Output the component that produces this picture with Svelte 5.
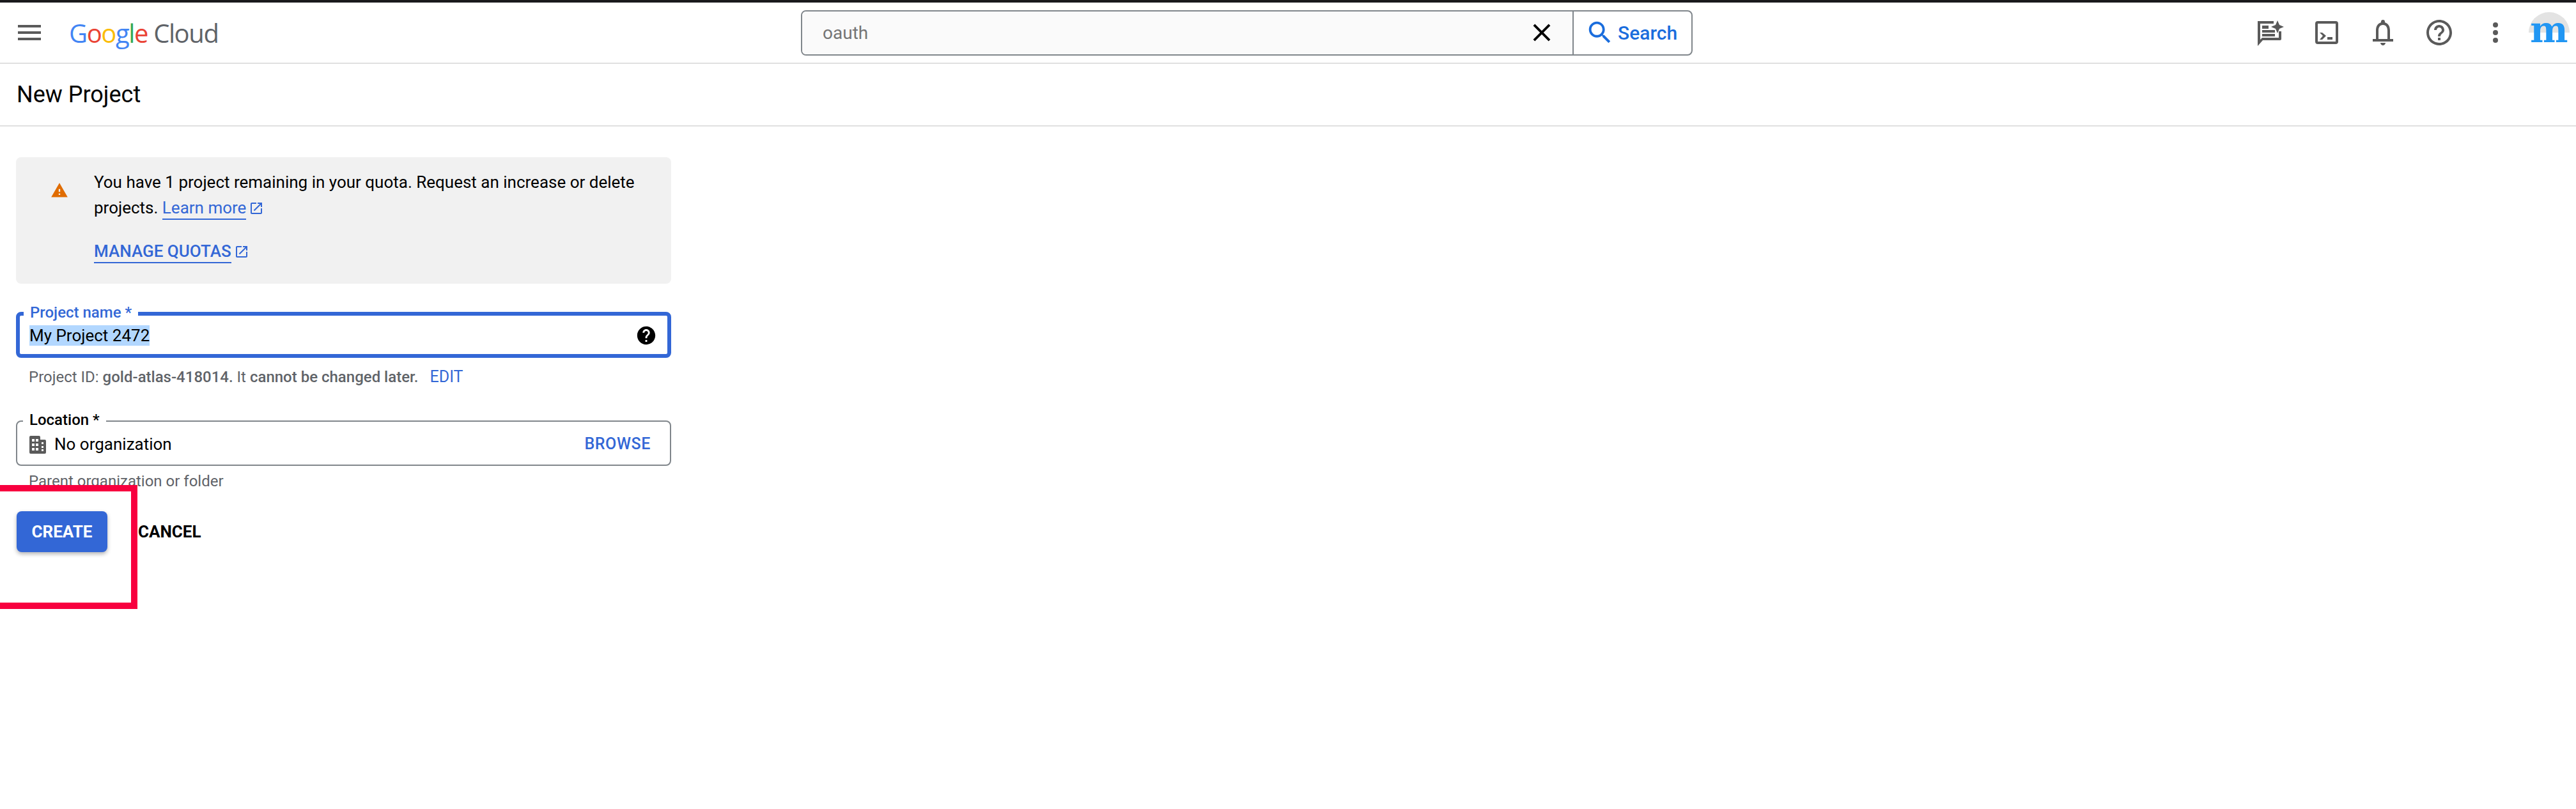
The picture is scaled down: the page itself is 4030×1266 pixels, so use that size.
<script>
  const projectName = 'My Project 2472';
  const helpOutline = 'M11 18h2v-2h-2v2zm1-16C6.48 2 2 6.48 2 12s4.48 10 10 10 10-4.48 10-10S17.52 2 12 2zm0 18c-4.41 0-8-3.59-8-8s3.59-8 8-8 8 3.59 8 8-3.59 8-8 8zm0-14c-2.21 0-4 1.79-4 4h2c0-1.1.9-2 2-2s2 .9 2 2c0 2-3 1.75-3 5h2c0-2.25 3-2.5 3-5 0-2.21-1.79-4-4-4z';
  const openNew = 'M19 19H5V5h7V3H5c-1.11 0-2 .9-2 2v14c0 1.1.89 2 2 2h14c1.1 0 2-.9 2-2v-7h-2v7zM14 3v2h3.59l-9.83 9.83 1.41 1.41L19 6.41V10h2V3h-7z';
</script>

<div class="page">
  <header class="top">
    <div class="brand">
      <svg class="menu" viewBox="0 0 36 24" width="36" height="24"><path d="M0 0h36v4H0zM0 10h36v4H0zM0 20h36v4H0z" /></svg>
      <div class="logo"><span class="b">G</span><span class="r">o</span><span class="y">o</span><span class="b">g</span><span class="g">l</span><span class="r">e</span> <span class="cloud">Cloud</span></div>
    </div>

    <div class="search">
      <div class="query">
        <span>oauth</span>
        <svg viewBox="0 0 24 24" width="46" height="46"><path d="M19 6.41L17.59 5 12 10.59 6.41 5 5 6.41 10.59 12 5 17.59 6.41 19 12 13.41 17.59 19 19 17.59 13.41 12z" /></svg>
      </div>
      <button class="search-btn">
        <svg viewBox="0 0 24 24" width="46" height="46"><path d="M15.5 14h-.79l-.28-.27C15.41 12.59 16 11.11 16 9.5 16 5.91 13.09 3 9.5 3S3 5.91 3 9.5 5.91 16 9.5 16c1.61 0 3.09-.59 4.23-1.57l.27.28v.79l5 4.99L20.49 19l-4.99-5zm-6 0C7.01 14 5 11.99 5 9.5S7.01 5 9.5 5 14 7.01 14 9.5 11.99 14 9.5 14z" /></svg>
        Search
      </button>
    </div>

    <div class="actions">
      <svg viewBox="0 0 48 48" width="48" height="48">
        <path d="M4 6h25v4H8v25l3-3h26V22h4v12a2 2 0 0 1-2 2H12L4 45z" />
        <path d="M11 13h10v5H11zM11 20h20v4H11zM11 26h20v4H11z" />
        <path d="M35 5l3 7 7 3-7 3-3 7-3-7-7-3 7-3z" />
      </svg>
      <svg viewBox="0 0 48 48" width="48" height="48">
        <rect x="8" y="8" width="32" height="32" rx="2" fill="none" stroke="#5a5a5a" stroke-width="4" />
        <path d="M13 24h4l6 5-6 6h-4l5-6zM25 31h8v4h-8z" />
      </svg>
      <svg viewBox="0 0 48 48" width="48" height="48">
        <path d="M24 4a3 3 0 0 1 3 3v1c6 2 8 7 8 13v13h5v4H8v-4h5V21c0-6 2-11 8-13V7a3 3 0 0 1 3-3zm0 8c-5 0-7 4-7 9v13h14V21c0-5-2-9-7-9zM20 40h8c0 2-2 4-4 4s-4-2-4-4z" />
      </svg>
      <svg viewBox="0 0 24 24" width="48" height="48"><path d={helpOutline} /></svg>
      <svg viewBox="0 0 48 48" width="48" height="48"><circle cx="24" cy="12" r="4" /><circle cx="24" cy="24" r="4" /><circle cx="24" cy="36" r="4" /></svg>
      <div class="avatar"><span class="dome"></span><span class="letter">m</span></div>
    </div>
  </header>

  <div class="subhead">New Project</div>

  <main class="form">
    <section class="alert">
      <svg class="warn" viewBox="0 0 24 24" width="28" height="28"><path d="M1 21h22L12 2 1 21zm12-3h-2v-2h2v2zm0-4h-2v-4h2v4z" /></svg>
      <div class="alert-body">
        <p>You have 1 project remaining in your quota. Request an increase or delete projects. <a href="#learn">Learn more</a><svg class="ext" viewBox="0 0 24 24" width="24" height="24"><path d={openNew} /></svg></p>
        <p class="quota"><a href="#quotas">MANAGE QUOTAS</a><svg class="ext" viewBox="0 0 24 24" width="24" height="24"><path d={openNew} /></svg></p>
      </div>
    </section>

    <div class="field focused">
      <label class="legend" for="pname">Project name *</label>
      <span class="selected" id="pname">{projectName}</span>
      <svg viewBox="0 0 24 24" width="34" height="34"><path d="M12 2C6.48 2 2 6.48 2 12s4.48 10 10 10 10-4.48 10-10S17.52 2 12 2zm1 17h-2v-2h2v2zm2.07-7.75l-.9.92C13.45 12.9 13 13.5 13 15h-2v-.5c0-1.1.45-2.1 1.17-2.83l1.24-1.26c.37-.36.59-.86.59-1.41 0-1.1-.9-2-2-2s-2 .9-2 2H8c0-2.21 1.79-4 4-4s4 1.79 4 4c0 .88-.36 1.68-.93 2.25z" /></svg>
    </div>
    <div class="hint">Project ID: <b>gold-atlas-418014.</b> It <b>cannot be changed later.</b><a class="edit" href="#edit">EDIT</a></div>

    <div class="field location">
      <span class="legend">Location *</span>
      <svg class="org" viewBox="0 0 26 28" width="26" height="28"><path d="M2 0h13a2 2 0 0 1 2 2v4h7a2 2 0 0 1 2 2v18a2 2 0 0 1-2 2H2a2 2 0 0 1-2-2V2a2 2 0 0 1 2-2zm2 5v4h4V5zm6 0v4h4V5zM4 12v4h4v-4zm6 0v4h4v-4zM4 19v4h4v-4zm6 0v4h4v-4zm9-9v3h3v-3zm0 6v3h3v-3zm0 5v3h3v-3z" fill-rule="evenodd" /></svg>
      <span class="org-name">No organization</span>
      <a class="browse" href="#browse">BROWSE</a>
    </div>
    <div class="hint parent">Parent organization or folder</div>

    <div class="buttons">
      <button class="create">CREATE</button>
      <button class="cancel">CANCEL</button>
    </div>
  </main>

  <div class="callout"></div>
</div>

<style>
  :global(body) {
    margin: 0;
    background: #fff;
  }

  .page {
    position: relative;
    width: 4030px;
    height: 1266px;
    overflow: hidden;
    font-family: Roboto, "Liberation Sans", sans-serif;
    color: #000;
  }

  svg {
    fill: #5a5a5a;
    display: block;
    flex: none;
  }

  button {
    font-family: inherit;
    background: none;
    border: none;
    padding: 0;
    cursor: pointer;
  }

  a {
    color: #3367d6;
    text-decoration: none;
  }

  .top {
    display: grid;
    grid-template-columns: 1253px 1395px 1fr;
    align-items: center;
    height: 94px;
    border-top: 4px solid #1a1a1c;
    border-bottom: 2px solid #e0e0e0;
  }

  .brand {
    display: flex;
    align-items: center;
    padding-left: 28px;
  }

  .logo {
    margin-left: 44px;
    font-family: "Open Sans", sans-serif;
    font-size: 40px;
    letter-spacing: -1.4px;
    color: #5f6368;
  }

  .b { color: #4285f4; }
  .r { color: #ea4335; }
  .y { color: #fbbc05; }
  .g { color: #34a853; }
  .cloud { color: #5f6368; }

  .search {
    display: flex;
    height: 71px;
    box-sizing: border-box;
    border: 2px solid #80868b;
    border-radius: 8px;
    overflow: hidden;
  }

  .query {
    flex: 1;
    display: flex;
    align-items: center;
    justify-content: space-between;
    padding: 0 25px 0 32px;
    background: #fafafa;
    font-size: 28px;
    color: #757575;
  }

  .query svg {
    fill: #000;
  }

  .search-btn {
    display: flex;
    align-items: center;
    gap: 5px;
    width: 186px;
    box-sizing: border-box;
    padding-left: 18px;
    border-left: 2px solid #80868b;
    font-size: 30px;
    font-weight: 500;
    color: #1a6ddd;
  }

  .search-btn svg {
    fill: #1a6ddd;
  }

  .actions {
    display: flex;
    align-items: center;
    justify-content: flex-end;
    gap: 40px;
    padding-right: 10px;
  }

  .avatar {
    position: relative;
    width: 64px;
    height: 64px;
    margin-left: -12px;
  }

  .dome {
    position: absolute;
    left: 0;
    top: 0;
    width: 64px;
    height: 32px;
    background: #e3e3e3;
    border-radius: 32px 32px 0 0;
  }

  .letter {
    position: absolute;
    left: 0;
    right: 0;
    top: -9px;
    text-align: center;
    font-family: "DejaVu Serif", serif;
    font-weight: 700;
    font-size: 56px;
    line-height: 72px;
    color: #2196f3;
  }

  .subhead {
    display: flex;
    align-items: center;
    height: 96px;
    padding-left: 26px;
    border-bottom: 2px solid #e0e0e0;
    font-size: 36px;
  }

  .form {
    display: flex;
    flex-direction: column;
    width: 1025px;
    margin: 48px 0 0 25px;
  }

  .alert {
    display: flex;
    height: 198px;
    box-sizing: border-box;
    padding: 19px 40px 0 54px;
    background: #f1f1f1;
    border-radius: 8px;
  }

  .warn {
    fill: #e06c00;
    margin-top: 19px;
    margin-right: 40px;
  }

  .alert-body p {
    margin: 0;
    font-size: 26px;
    line-height: 40px;
  }

  .alert-body a {
    border-bottom: 2px solid #3367d6;
    padding-bottom: 2px;
  }

  .ext {
    display: inline-block;
    vertical-align: -4px;
    margin-left: 4px;
    fill: #3367d6;
  }

  .alert-body .quota {
    margin-top: 28px;
    font-weight: 500;
  }

  .field {
    position: relative;
    display: flex;
    align-items: center;
    box-sizing: border-box;
    border-radius: 8px;
  }

  .focused {
    height: 72px;
    margin-top: 44px;
    padding: 1px 16px 0 15px;
    border: 6px solid #3367d6;
    justify-content: space-between;
    font-size: 26px;
  }

  .legend {
    position: absolute;
    left: 6px;
    padding: 0 10px;
    background: #fff;
    line-height: 24px;
    font-size: 24px;
  }

  .focused .legend {
    top: -17px;
    color: #3367d6;
    font-weight: 500;
  }

  .selected {
    background: #b2d7ff;
    line-height: 32px;
  }

  .focused svg {
    fill: #000;
  }

  .hint {
    margin: 16px 0 0 20px;
    font-size: 24px;
    line-height: 28px;
    color: #5f6368;
  }

  .hint b {
    font-weight: 500;
  }

  .edit {
    margin-left: 18px;
    font-size: 25px;
  }

  .location {
    height: 71px;
    margin-top: 54px;
    padding: 0 30px 0 19px;
    border: 2px solid #80868b;
    font-size: 26px;
  }

  .location .legend {
    left: 9px;
    top: -15px;
    font-weight: 500;
  }

  .org {
    margin-top: 4px;
  }

  .org-name {
    margin-left: 13px;
    margin-top: 2px;
  }

  .browse {
    margin-left: auto;
    margin-top: 2px;
    font-size: 25px;
    font-weight: 500;
    letter-spacing: 0.6px;
  }

  .parent {
    margin-top: 10px;
  }

  .buttons {
    display: flex;
    align-items: center;
    gap: 48px;
    margin: 33px 0 0 1px;
  }

  .create {
    width: 142px;
    height: 64px;
    border-radius: 8px;
    background: #3367d6;
    color: #fff;
    font-size: 26px;
    font-weight: 700;
    box-shadow: 0 3px 6px rgba(0, 0, 0, 0.3);
  }

  .cancel {
    font-size: 26px;
    font-weight: 700;
    color: #000;
  }

  .callout {
    position: absolute;
    left: -12px;
    top: 759px;
    width: 207px;
    height: 174px;
    border: 10px solid #f8003f;
  }
</style>
